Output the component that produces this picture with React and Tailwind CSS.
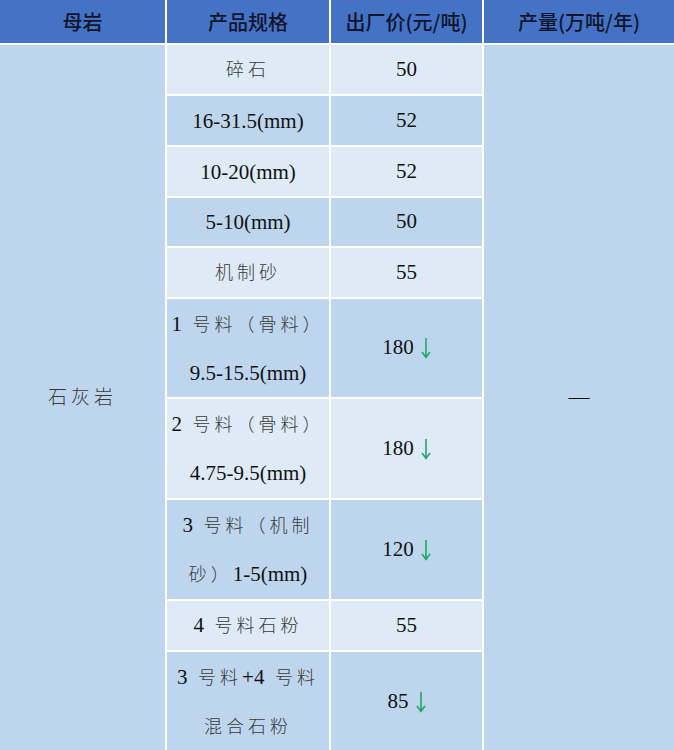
import React from "react";

const rows = [
  { spec: ["碎石"], price: "50", light: true, h: "h-[51px]" },
  { spec: ["16-31.5(mm)"], price: "52", light: false, h: "h-[51px]" },
  { spec: ["10-20(mm)"], price: "52", light: true, h: "h-[51px]" },
  { spec: ["5-10(mm)"], price: "50", light: false, h: "h-[50px]" },
  { spec: ["机制砂"], price: "55", light: true, h: "h-[51px]" },
  { spec: ["1 号料（骨料）", "9.5-15.5(mm)"], price: "180", down: true, light: false, h: "h-[100px]" },
  { spec: ["2 号料（骨料）", "4.75-9.5(mm)"], price: "180", down: true, light: true, h: "h-[101px]" },
  { spec: ["3 号料（机制", "砂）1-5(mm)"], price: "120", down: true, light: false, h: "h-[101px]" },
  { spec: ["4 号料石粉"], price: "55", light: true, h: "h-[50px]" },
  { spec: ["3 号料+4 号料", "混合石粉"], price: "85", down: true, light: false, h: "h-[101px]" },
];

function SpecLine({ text }) {
  // split CJK runs so they can get the lighter, spaced look
  const parts = text.split(/([\u3000-\u9fff\uff00-\uffef]+)/).filter(Boolean);
  return (
    <div className="leading-[48px] whitespace-pre">
      {parts.map((p, i) =>
        /[\u3000-\u9fff\uff00-\uffef]/.test(p) ? (
          <span key={i} className="tracking-[4px] text-[18px] font-light text-[#3a3a3a]">
            {p}
          </span>
        ) : (
          <span key={i}>{p.replace(/ /g, "  ")}</span>
        )
      )}
    </div>
  );
}

function DownArrow() {
  return (
    <svg width="10" height="22" viewBox="0 0 10 22" className="inline-block ml-[7px] align-[-5px]">
      <path d="M5 1 V20 M1 15 L5 20.5 L9 15" fill="none" stroke="#1fa868" strokeWidth="1.6" />
    </svg>
  );
}

export default function App() {
  return (
    <div className="w-[674px] h-[750px] overflow-hidden bg-[#bdd6ee]">
      <table className="table-fixed border-collapse w-[674px] font-['Liberation_Serif','Noto_Sans_CJK_SC',serif] text-[21px] text-[#111]">
        <colgroup>
          <col className="w-[166px]" />
          <col className="w-[164px]" />
          <col className="w-[153px]" />
          <col className="w-[191px]" />
        </colgroup>
        <thead>
          <tr className="h-[44px] bg-[#4472c4] font-['Noto_Sans_CJK_SC',sans-serif] text-[20px] text-[#10152b]">
            <th className="p-0 border-2 border-t-0 border-l-0 border-white font-medium">母岩</th>
            <th className="p-0 border-2 border-t-0 border-white font-medium">产品规格</th>
            <th className="p-0 border-2 border-t-0 border-white font-medium">出厂价(元/吨)</th>
            <th className="p-0 border-2 border-t-0 border-r-0 border-white font-medium">产量(万吨/年)</th>
          </tr>
        </thead>
        <tbody>
          {rows.map((r, i) => (
            <tr key={i} className={r.h}>
              {i === 0 && (
                <td
                  rowSpan={rows.length}
                  className="p-0 border-2 border-l-0 border-white bg-[#bdd6ee] text-center align-middle"
                >
                  <span className="tracking-[4px] text-[19px] font-light text-[#3a3a3a]">石灰岩</span>
                </td>
              )}
              <td className={`p-0 border-2 border-white text-center ${r.light ? "bg-[#deeaf6]" : "bg-[#bdd6ee]"}`}>
                {r.spec.map((s, j) => (
                  <SpecLine key={j} text={s} />
                ))}
              </td>
              <td className={`p-0 border-2 border-white text-center ${r.light ? "bg-[#deeaf6]" : "bg-[#bdd6ee]"}`}>
                {r.price}
                {r.down && <DownArrow />}
              </td>
              {i === 0 && (
                <td
                  rowSpan={rows.length}
                  className="p-0 border-2 border-r-0 border-white bg-[#bdd6ee] text-center align-middle"
                >
                  —
                </td>
              )}
            </tr>
          ))}
        </tbody>
      </table>
    </div>
  );
}
